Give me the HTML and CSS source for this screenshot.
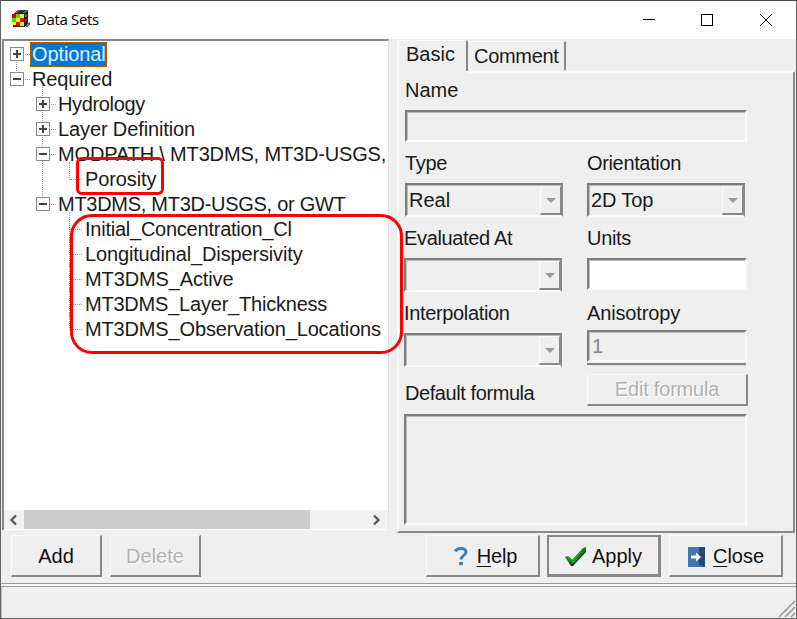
FILE: index.html
```html
<!DOCTYPE html>
<html lang="en">
<head>
<meta charset="utf-8">
<title>Data Sets</title>
<link rel="stylesheet" href="styles.css">
</head>
<body>
<div class="window">
  <header class="titlebar">
    <svg class="app-icon" width="20" height="18" viewBox="0 0 20 18" shape-rendering="crispEdges">
      <path d="M1 4L5 0H16V13L12 17H1Z" fill="#222"/>
      <path d="M2 3L5 0H8L5 3Z" fill="#e22"/><path d="M6 3L9 0H12L9 3Z" fill="#22b"/><path d="M10 3L13 0H16L13 3Z" fill="#283"/>
      <path d="M0 4h4v4h-4z" fill="#e00"/><path d="M4 4h4v4h-4zM0 8h4v4h-4z" fill="#2e2"/><path d="M8 4h4v4h-4zM4 8h4v4h-4zM0 12h4v3h-4z" fill="#ff0"/>
      <path d="M8 8h4v4h-4zM4 12h4v4h-4z" fill="#f00"/><path d="M8 12h4v4h-4z" fill="#ee0"/>
      <path d="M13 4h2v3h-2z" fill="#c33"/><path d="M13 9h2v3h-2z" fill="#247"/>
      <path d="M13 16L18 11V14L15 17Z" fill="#777"/>
    </svg>
    <span class="title">Data Sets</span>
    <svg class="controls" width="132" height="14" viewBox="0 0 132 14" fill="none" stroke="#000">
      <path d="M0 6.5h12M58.5 1.5h11v11h-11z" shape-rendering="crispEdges"/><path d="M117 1L129 13M129 1L117 13"/>
    </svg>
  </header>

  <main class="content">
    <section class="tree-pane">
      <div class="tree">
        <div class="row l0"><i class="box plus"></i><i class="stub"></i><span class="selected">Optional</span></div>
        <div class="row l0"><i class="box"></i><i class="stub"></i><span class="t-req">Required</span></div>
        <div class="row l1 up"><i class="box plus"></i><i class="stub"></i><span class="t-hyd">Hydrology</span></div>
        <div class="row l1 up"><i class="box plus"></i><i class="stub"></i><span class="t-lay">Layer Definition</span></div>
        <div class="row l1 up"><i class="box"></i><i class="stub"></i><span class="t-mod">MODPATH \ MT3DMS, MT3D-USGS,</span></div>
        <div class="row l2 last through"><i class="stub"></i><span class="t-por">Porosity</span></div>
        <div class="row l1 up"><i class="box"></i><i class="stub"></i><span class="t-mt">MT3DMS, MT3D-USGS, or GWT</span></div>
        <div class="row l2"><i class="stub"></i><span class="t-ini">Initial_Concentration_Cl</span></div>
        <div class="row l2"><i class="stub"></i><span class="t-lon">Longitudinal_Dispersivity</span></div>
        <div class="row l2"><i class="stub"></i><span class="t-act">MT3DMS_Active</span></div>
        <div class="row l2"><i class="stub"></i><span class="t-thk">MT3DMS_Layer_Thickness</span></div>
        <div class="row l2 last"><i class="stub"></i><span class="t-obs">MT3DMS_Observation_Locations</span></div>
      </div>
      <div class="scrollbar">
        <svg width="20" height="19" viewBox="0 0 20 19" fill="none" stroke="#555" stroke-width="2.2"><path d="M12 5.5L7.5 10L12 14.5"/></svg>
        <div class="thumb"></div>
        <svg class="right" width="21" height="19" viewBox="0 0 21 19" fill="none" stroke="#555" stroke-width="2.2"><path d="M7 5.5L11.5 10L7 14.5"/></svg>
      </div>
    </section>

    <section class="tabs">
      <nav class="tab-row">
        <span class="tab active"><span class="t-basic">Basic</span></span><span class="tab"><span class="t-com">Comment</span></span>
      </nav>
      <div class="page">
        <div class="group name"><label class="t-name">Name</label><div class="field"></div></div>
        <div class="group type"><label class="t-type">Type</label><div class="field combo"><span class="t-real">Real</span><i class="drop"></i></div></div>
        <div class="group orientation"><label class="t-ori">Orientation</label><div class="field combo"><span class="t-top">2D Top</span><i class="drop"></i></div></div>
        <div class="group evaluated"><label class="t-eval">Evaluated At</label><div class="field combo"><i class="drop"></i></div></div>
        <div class="group units"><label class="t-units">Units</label><div class="field white"></div></div>
        <div class="group interpolation"><label class="t-int">Interpolation</label><div class="field combo"><i class="drop"></i></div></div>
        <div class="group anisotropy"><label class="t-ani">Anisotropy</label><div class="field value">1</div><div class="rule"></div></div>
        <div class="group formula-label"><label class="t-def">Default formula</label></div>
        <div class="btn edit disabled"><span class="t-edit">Edit formula</span></div>
        <div class="field memo"></div>
      </div>
    </section>
  </main>

  <div class="actions">
    <div class="btn add"><span class="t-add">Add</span></div>
    <div class="btn delete disabled"><span class="t-del">Delete</span></div>
    <div class="btn help">
      <svg width="14" height="19" viewBox="0 0 14 19" fill="none" stroke="#4180bb" stroke-width="3"><path d="M1.5 4.5C2 2.7 4 1.5 6.5 1.5C9.8 1.5 12 3 12 5.3C12 8.4 7 8.5 7 12.5"/><path d="M7 15v3.3" stroke-width="3.6"/></svg>
      <span class="t-help"><u>H</u>elp</span>
    </div>
    <div class="btn apply">
      <svg width="22" height="20" viewBox="0 0 22 20"><path d="M1 11L4 10L8 14L18 2L21 1V5L8 19H6Z" fill="#126"/><path d="M0 10L3 9L7 13L18 1L21 0V3L8 17H6Z" fill="#080"/><path d="M1 10L3 9L7 14L19 1L8 16Z" fill="#0b0"/></svg>
      <span class="t-apply">Apply</span>
    </div>
    <div class="btn close">
      <svg width="17" height="20" viewBox="0 0 17 20"><path d="M0 0h17v20H0z" fill="#3f78b3"/><path d="M11 0h6v20l-6-2z" fill="#254a70"/><path d="M3 8.5h5V5.5L13 10L8 14.5V11.5H3z" fill="#fff"/></svg>
      <span class="t-close"><u>C</u>lose</span>
    </div>
  </div>
  <footer class="status">
    <svg width="18" height="18" viewBox="0 0 18 18" fill="none" stroke="#999" stroke-width="1.7"><path d="M1 17L17 1M7 17L17 7M13 17L17 13"/></svg>
  </footer>
  <div class="mark small"></div>
  <div class="mark large"></div>
</div>
</body>
</html>
```
FILE: styles.css
```css
* { box-sizing: border-box; }
body { margin: 0; width: 797px; height: 619px; overflow: hidden; background: #efefef; font: 20px/25px "Liberation Sans", Arial, sans-serif; color: #1a1a1a; }
.window { position: relative; width: 797px; height: 619px; border: 1px solid #666; border-top-color: #4a4a4a; display: flex; flex-direction: column; background: #efefef; }
.titlebar { height: 38px; background: #fff; display: flex; align-items: center; padding-left: 11px; flex: none; }
.app-icon { margin-bottom: 2px; }
.title { font: 15px/20px "Open Sans", "Noto Sans", sans-serif; color: #000; margin: -2px 0 0 4px; letter-spacing: -.35px; }
.controls { margin-left: auto; margin-right: 21px; }
.content { height: 495px; display: flex; flex: none; }
.tree-pane { width: 387px; height: 491px; border-left: 2px solid #888; border-top: 2px solid #888; border-right: 1px solid #e2e2e2; background: #fff; display: flex; flex-direction: column; margin-left: 1px; }
.tree { height: 469px; padding-top: 1px; overflow: hidden; }
.row { height: 25px; display: flex; align-items: center; position: relative; white-space: pre; }
.l0 { padding-left: 6px; }
.l1 { padding-left: 32px; }
.l2 { padding-left: 66px; }
.box { width: 14px; height: 14px; border: 1px solid #8a8a8a; background: linear-gradient(#444, #444) center / 8px 2px no-repeat #fff; flex: none; position: relative; z-index: 1; top: -1px; }
.plus { background: linear-gradient(#444, #444) center / 8px 2px no-repeat, linear-gradient(#444, #444) center / 2px 8px no-repeat #fff; }
.stub { width: 5px; border-top: 1px dotted #999; flex: none; margin: 0 1px; }
.l2 .stub { width: 12px; margin: 0 2px 0 0; }
.row > span { margin-left: 1px; }
.row > .selected { background: #0078d7; color: #e4f1ff; outline: 1px dotted #c60; outline-offset: -1px; height: 25px; width: 77px; padding-left: 2px; margin-left: -1px; letter-spacing: -.12px; }
.l0 + .l0::before, .up::before, .through::before { content: ""; position: absolute; top: -7px; height: 15px; left: 12px; border-left: 1px dotted #999; }
.up::before { left: 38px; }
.through::before { left: 38px; height: 40px; }
.l2::after { content: ""; position: absolute; left: 65px; top: -5px; height: 30px; border-left: 1px dotted #999; }
.last::after { height: 18px; }
.scrollbar { height: 19px; background: #f0f0f0; display: flex; }
.thumb { width: 286px; background: #cdcdcd; }
.right { margin-left: auto; }
.tabs { width: 398px; margin-left: 8px; display: flex; flex-direction: column; }
.tab-row { height: 32px; display: flex; align-items: flex-end; }
.tab { height: 29px; width: 98px; border-top: 1px solid #fff; border-right: 2px solid #888; padding-left: 6px; line-height: 29px; margin-bottom: 1px; }
.tab.active { width: 71px; height: 31px; margin: 0; border-left: 2px solid #fafafa; padding-left: 7px; line-height: 27px; border-radius: 3px 2px 0 0; }
.page { height: 462px; border: 2px solid #fafafa; border-right-color: #888; border-bottom-color: #888; position: relative; display: grid; padding-left: 6px; grid-template-columns: 182px 160px; grid-template-rows: 73px 75px 75px 68px 34px 120px; padding-top: 5px; }
.page::before { content: ""; height: 2px; width: 68px; position: absolute; left: 0; top: -2px; background: #efefef; }
.group { display: flex; flex-direction: column; }
.name { grid-column: 1 / 3; }
.field { width: 158px; height: 34px; border: 2px solid #7d7d7d; border-right: 2px solid #fafafa; border-bottom: 2px solid #fafafa; box-shadow: inset 1px 1px #bcbcbc; background: #efefef; }
.name .field { width: 342px; height: 32px; margin-top: 7px; }
.group label { height: 25px; }
.type .field, .orientation .field, .evaluated .field, .interpolation .field { margin-top: 7px; }
.evaluated, .interpolation { margin-left: -1px; }
.units .field { margin-top: 7px; height: 32px; width: 160px; }
.anisotropy .field { margin-top: 4px; height: 32px; width: 160px; }
.field.white { background: #fff; }
.value { color: #888; padding-left: 3px; line-height: 28px; }
.rule { width: 159px; height: 3px; margin-top: 1px; background: #858585; border-bottom: 1px solid #ddd; }
.combo { display: flex; padding: 1px 0 0 2px; line-height: 29px; border-right: 2px solid #888; }
.drop { width: 21px; height: 29px; margin-left: auto; border: 1px solid #fafafa; border-right: 1px solid #888; border-bottom: 2px solid #888; display: flex; align-items: center; justify-content: center; }
.drop::before { content: ""; border: 5px solid transparent; border-top-color: #999; border-bottom: 0; }
.formula-label { padding-top: 12px; }
.memo { grid-column: 1 / 3; width: 343px; height: 111px; margin: 11px 0 0 -1px; }
.btn { height: 42px; border: 1px solid #fafafa; border-right: 2px solid #888; border-bottom: 2px solid #888; display: flex; align-items: center; justify-content: center; background: #efefef; color: #111; }
.disabled { color: #b2b2b2; text-shadow: 1px 1px #fff; }
.edit { height: 32px; width: 161px; margin-top: 5px; }
.actions { height: 49px; display: flex; padding: 1px 0 0 10px; flex: none; }
.add, .delete { width: 91px; }
.delete { margin-left: 8px; }
.help { width: 114px; margin-left: 225px; gap: 9px; padding-left: 6px; }
.apply { width: 114px; margin-left: 7px; gap: 5px; border: 2px solid #888; border-right-width: 3px; border-bottom-width: 3px; }
.close { width: 114px; margin-left: 8px; gap: 8px; padding-left: 1px; }
.btn u { text-decoration-thickness: 1px; text-underline-offset: 3px; }
.add, .delete, .help, .apply, .close { padding-top: 2px; }
.status { height: 35px; flex: none; border-top: 1px solid #999; box-shadow: inset 0 2px #f5f5f5, inset 0 3px #999, inset 1px 0 #bbb; display: flex; align-items: flex-end; justify-content: flex-end; }
.mark { position: absolute; z-index: 3; border: 3px solid #f00; }
.small { left: 75px; top: 156px; width: 88px; height: 38px; border-radius: 6px; }
.large { left: 69px; top: 213px; width: 333px; height: 140px; border-radius: 22px; }
.t-req, .t-por, .t-act, .t-lay { letter-spacing: -.12px; }
.t-hyd, .t-ori, .t-eval, .t-int { letter-spacing: -.35px; }
.t-mod { letter-spacing: -.16px; }
.t-mt { letter-spacing: -.28px; }
.t-ini { letter-spacing: -.24px; }
.t-lon, .t-obs { letter-spacing: -.15px; }
.t-thk { letter-spacing: -.21px; }
.t-com, .t-type, .t-units { letter-spacing: -.3px; }
.t-ani, .t-help, .t-top { letter-spacing: -.15px; }
.t-def { letter-spacing: -.42px; }
.t-edit { letter-spacing: -.2px; }
```
